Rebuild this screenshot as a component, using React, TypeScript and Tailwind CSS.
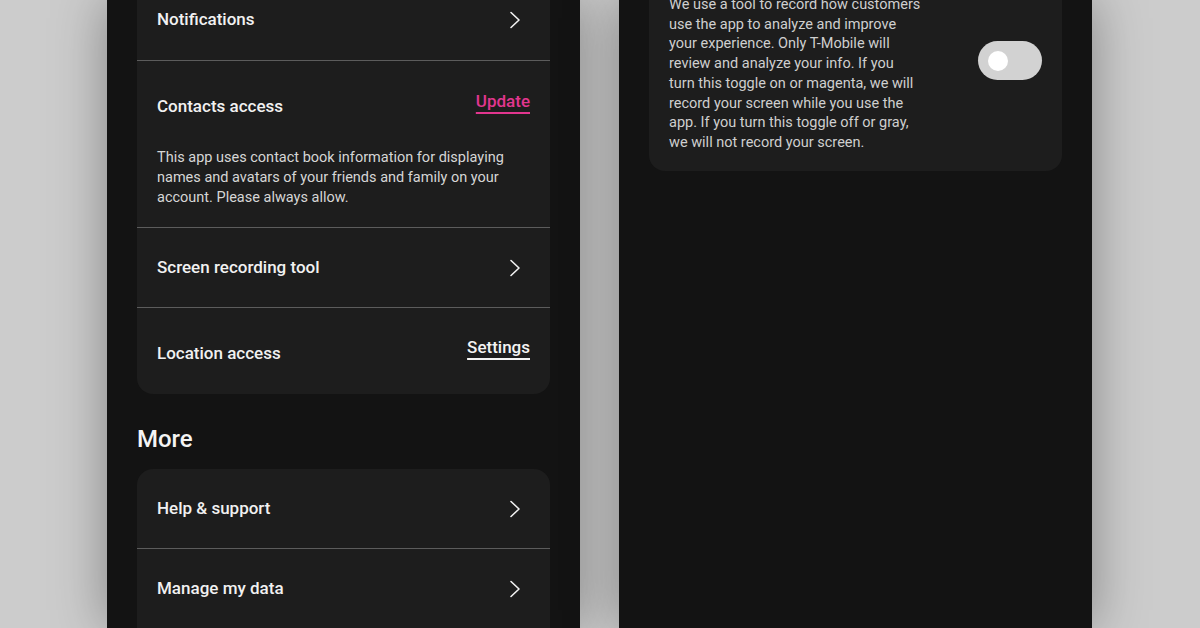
import type { ReactNode } from 'react'

const Chevron = () => (
  <svg width="12" height="18" viewBox="0 0 12 18" fill="none" className="mr-[9px]">
    <polyline points="2,1.5 10,9 2,16.5" stroke="#f2f2f2" strokeWidth="1.6" strokeLinecap="round" strokeLinejoin="round" />
  </svg>
)

function Row({ title, right, className = '' }: { title: string; right?: ReactNode; className?: string }) {
  return (
    <div className={`flex items-center justify-between px-5 ${className}`}>
      <span className="text-[17px] font-medium text-[#f1f1f1]">{title}</span>
      {right ?? <Chevron />}
    </div>
  )
}

function LeftPhone() {
  return (
    <div className="w-[473px] h-[628px] overflow-hidden bg-[#131313] px-[30px] shadow-[0_0_50px_rgba(0,0,0,0.35)]">
      <div className="-mt-[20px] rounded-2xl bg-[#1d1d1d]">
        <Row title="Notifications" className="h-[80px]" />

        <div className="h-[167px] border-t border-[#5c5c5c] px-5 pt-[33px]">
          <div className="flex items-start justify-between">
            <span className="text-[17px] leading-6 font-medium text-[#f1f1f1]">Contacts access</span>
            <a className="-mt-[5px] text-[17px] leading-6 font-medium text-[#e2368f] underline decoration-2 underline-offset-[5px]">
              Update
            </a>
          </div>
          <p className="mt-[30px] whitespace-nowrap text-[14.5px] leading-5 text-[#d6d6d6]">
            This app uses contact book information for displaying
            <br />
            names and avatars of your friends and family on your
            <br />
            account. Please always allow.
          </p>
        </div>

        <Row title="Screen recording tool" className="h-[80px] border-t border-[#5c5c5c]" />

        <div className="flex h-[87px] items-center justify-between border-t border-[#5c5c5c] px-5 pt-[5px]">
          <span className="text-[17px] font-medium text-[#f1f1f1]">Location access</span>
          <a className="-mt-[11px] text-[17px] font-medium text-[#f4f4f4] underline decoration-2 underline-offset-[5px]">
            Settings
          </a>
        </div>
      </div>

      <h2 className="mt-[31px] text-[24px] leading-7 font-medium text-[#f4f4f4]">More</h2>

      <div className="mt-4 rounded-2xl bg-[#1d1d1d]">
        <Row title="Help & support" className="h-[79px]" />
        <Row title="Manage my data" className="h-[80px] border-t border-[#5c5c5c]" />
        <div className="h-[40px] border-t border-[#5c5c5c]" />
      </div>
    </div>
  )
}

function RightPhone() {
  return (
    <div className="w-[473px] h-[628px] overflow-hidden bg-[#131313] px-[30px] shadow-[0_0_50px_rgba(0,0,0,0.35)]">
      <div className="-mt-[25px] flex justify-between rounded-2xl bg-[#1d1d1d] px-5 pt-5 pb-[18px]">
        <p className="whitespace-nowrap text-[14.5px] leading-[19.7px] text-[#cfcfcf]">
          We use a tool to record how customers
          <br />
          use the app to analyze and improve
          <br />
          your experience. Only T-Mobile will
          <br />
          review and analyze your info. If you
          <br />
          turn this toggle on or magenta, we will
          <br />
          record your screen while you use the
          <br />
          app. If you turn this toggle off or gray,
          <br />
          we will not record your screen.
        </p>
        <div className="mt-[46px] flex h-[39px] w-[64px] items-center rounded-full bg-[#d2d2d2] pl-[10px]">
          <div className="h-[20px] w-[20px] rounded-full bg-white" />
        </div>
      </div>
    </div>
  )
}

export default function App() {
  return (
    <div
      className="flex h-[628px] w-[1200px] gap-[39px] overflow-hidden bg-[#cccccc] pl-[107px]"
      style={{ fontFamily: 'Roboto, "Noto Sans", sans-serif' }}
    >
      <LeftPhone />
      <RightPhone />
    </div>
  )
}
